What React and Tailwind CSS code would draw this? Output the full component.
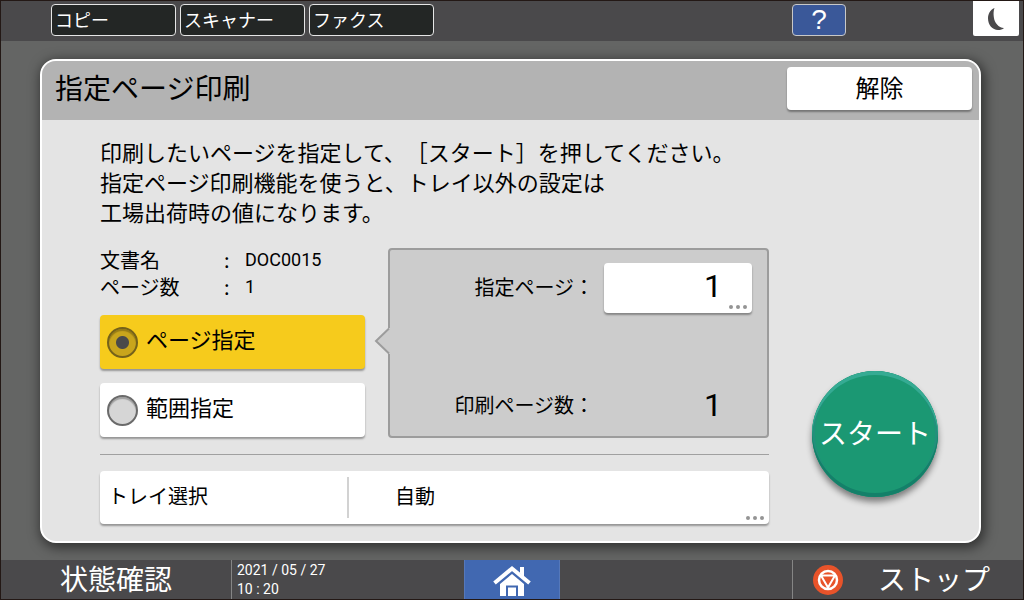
import React, { useState } from "react";

const tabs = ["コピー", "スキャナー", "ファクス"];

const modes = [
  { id: "page", label: "ページ指定" },
  { id: "range", label: "範囲指定" },
];

function Dots() {
  return (
    <span className="absolute bottom-1 right-[5px] flex gap-[3px]" aria-hidden="true">
      <span className="w-1 h-1 rounded-full bg-[#949494]" />
      <span className="w-1 h-1 rounded-full bg-[#949494]" />
      <span className="w-1 h-1 rounded-full bg-[#949494]" />
    </span>
  );
}

function MoonIcon() {
  return (
    <svg width="18" height="24" viewBox="0 0 18 24" aria-hidden="true">
      <path d="M7.500 1C3 3 1 7 1 11.500C1 18 5.500 23 11 23C13.500 23 15.500 22.400 17 21C11.500 20.500 7.500 16 6.800 10C6.400 6.500 6.500 3.500 7.500 1Z" fill="#4a494b" />
    </svg>
  );
}

function HomeIcon() {
  return (
    <svg width="40" height="32" viewBox="0 0 40 32" aria-hidden="true">
      <path d="M28 2h4v10l-4-4z" fill="#fff" />
      <path d="M2.500 18L20 3.500L37.500 18" fill="none" stroke="#fff" strokeWidth="4" />
      <path d="M8 31V19L20 9L32 19V31H26V20.500H14V31Z" fill="#fff" />
      <path d="M16 22.500h8V31h-8z" fill="#fff" />
    </svg>
  );
}

function StopIcon() {
  return (
    <svg width="30" height="30" viewBox="0 0 30 30" aria-hidden="true">
      <circle cx="15" cy="15" r="15" fill="#e8532a" />
      <circle cx="15" cy="15" r="9" fill="none" stroke="#fff" strokeWidth="2.500" />
      <path d="M8 10.500h14l-7 12z" fill="none" stroke="#fff" strokeWidth="2" strokeLinejoin="round" />
    </svg>
  );
}

function TopBar() {
  return (
    <header className="flex items-start h-10 pl-[50px] pr-1 bg-[#4a494b] text-white">
      <nav className="flex gap-1 pt-[3px]">
        {tabs.map((tab) => (
          <button
            key={tab}
            className="w-[125px] h-8 px-[3px] pb-[2px] flex items-center text-left text-lg leading-none bg-[#232625] border border-[#e6e6e6] rounded"
          >
            {tab}
          </button>
        ))}
      </nav>
      <div className="ml-auto flex items-start gap-[127px]">
        <button className="w-[54px] h-8 mt-[3px] font-['Liberation_Sans'] text-[28px] leading-none bg-[#3a5899] border border-[#c8c8c8] rounded">
          ?
        </button>
        <button aria-label="省エネ" className="w-[46px] h-[35px] flex items-center justify-center bg-white rounded-b-xs">
          <MoonIcon />
        </button>
      </div>
    </header>
  );
}

function BottomBar() {
  return (
    <footer className="grid grid-cols-[1fr_96px_1fr] h-[39px] bg-[#4a494b] text-white">
      <div className="flex">
        <button className="w-[230px] pb-1 text-[28px] leading-none">状態確認</button>
        <div className="border-l border-[#858585] pl-[5px] pt-px font-['Roboto',sans-serif] text-sm leading-[19px]">
          <p>2021 / 05 / 27</p>
          <p>10 : 20</p>
        </div>
      </div>
      <button aria-label="ホーム" className="flex items-center justify-center pt-[2px] bg-[#4168b1] border-x border-[#5578ba]">
        <HomeIcon />
      </button>
      <button className="ml-auto w-[231px] flex items-center gap-[35px] pl-5 border-l border-[#858585]">
        <StopIcon />
        <span className="pb-1 text-[28px] leading-none">ストップ</span>
      </button>
    </footer>
  );
}

export default function App() {
  const [mode, setMode] = useState("page");

  return (
    <div className="min-h-screen flex flex-col border border-[#231815] bg-[#646564] text-black font-['Noto_Sans_CJK_JP',sans-serif] [text-spacing-trim:space-all]">
      <TopBar />

      <main className="flex-1 flex flex-col pt-[18px] pb-[17px] pl-[39px] pr-[42px]">
        <section className="flex-1 flex flex-col bg-[#e4e4e4] border-2 border-white rounded-2xl overflow-hidden shadow-[2px_3px_12px_2px_rgba(0,0,0,0.5)]">
          <div className="flex justify-between items-start h-[59px] pl-[13px] pr-[7px] pt-[6px] bg-[#b3b3b3]">
            <h1 className="text-[28px] leading-[40px]">指定ページ印刷</h1>
            <button className="w-[185px] h-[43px] pb-1 text-2xl leading-none bg-white rounded shadow-[0_2px_2px_rgba(0,0,0,0.35)]">
              解除
            </button>
          </div>

          <div className="flex-1 flex pl-[58px] pt-4 pb-[17px]">
            <div className="flex-1">
              <p className="text-[22px] leading-[30px]">
                印刷したいページを指定して、［スタート］を押してください。
                <br />
                指定ページ印刷機能を使うと、トレイ以外の設定は
                <br />
                工場出荷時の値になります。
              </p>

              <div className="flex items-end gap-[23px] mt-5">
                <div className="w-[265px] pb-px">
                  <dl className="grid grid-cols-[124px_21px_1fr] text-xl leading-[27px]">
                    <dt>文書名</dt>
                    <dd>:</dd>
                    <dd className="font-['Roboto',sans-serif] text-lg leading-[27px]">DOC0015</dd>
                    <dt>ページ数</dt>
                    <dd>:</dd>
                    <dd className="font-['Roboto',sans-serif] text-lg leading-[27px]">1</dd>
                  </dl>
                  <div className="flex flex-col gap-[14px] mt-[15px]">
                    {modes.map((m) => (
                      <label
                        key={m.id}
                        className="flex items-center gap-2 h-[54px] pl-[7px] text-[22px] leading-none bg-white has-checked:bg-[#f6cb1c] rounded shadow-[0_2px_2px_rgba(0,0,0,0.35)]"
                      >
                        <input
                          type="radio"
                          name="mode"
                          checked={mode === m.id}
                          onChange={() => setMode(m.id)}
                          className="appearance-none w-[31px] h-[31px] rounded-full border-2 border-[#6a6a6a] bg-[#d6d6d6] shadow-[inset_0_2px_1px_rgba(0,0,0,0.25)] checked:border-[#75621a] checked:bg-[radial-gradient(circle,#4a4a4a_6px,#c9a51c_7px)]"
                        />
                        <span className="pb-2">{m.label}</span>
                      </label>
                    ))}
                  </div>
                </div>

                <div className="relative flex-1 flex flex-col justify-between h-[190px] pt-[13px] pb-[13px] pr-[15px] bg-[#cccccc] border-2 border-[#9c9c9c] rounded text-xl">
                  <svg className="absolute -left-4 top-[78px]" width="17" height="26" viewBox="0 0 17 26" aria-hidden="true">
                    <path d="M17 0H15L2 13L15 26H17Z" fill="#cccccc" />
                    <path d="M15 0.500L2 13L15 25.500" fill="none" stroke="#9c9c9c" strokeWidth="2" />
                  </svg>
                  <div className="flex items-center justify-end gap-[10px]">
                    <label htmlFor="page" className="pb-[2px]">指定ページ：</label>
                    <span className="relative w-[148px] h-[50px] bg-white rounded shadow-[0_2px_2px_rgba(0,0,0,0.35)]">
                      <input
                        id="page"
                        defaultValue="1"
                        className="w-full h-full pr-[30px] pb-1 text-right font-['Roboto',sans-serif] text-[32px] leading-none bg-transparent outline-none"
                      />
                      <Dots />
                    </span>
                  </div>
                  <div className="flex items-center justify-end gap-[10px]">
                    <span>印刷ページ数：</span>
                    <output className="w-[148px] pr-[30px] text-right font-['Roboto',sans-serif] text-[32px] leading-[36px]">1</output>
                  </div>
                </div>
              </div>

              <hr className="mt-4 border-[#a0a0a0]" />

              <button className="relative w-full h-[53px] mt-4 flex items-center text-left text-xl leading-none bg-white rounded shadow-[0_2px_2px_rgba(0,0,0,0.35)]">
                <span className="w-[247px] pl-2 pb-1">トレイ選択</span>
                <span className="h-[41px] flex items-center pl-[46px] pb-1 border-l-2 border-[#d2d2d2]">自動</span>
                <Dots />
              </button>
            </div>

            <div className="w-[210px] flex items-end justify-center pl-[2px] pb-[27px]">
              <button className="w-[126px] h-[126px] rounded-full pb-1 text-[28px] leading-none text-white bg-[#1b9873] shadow-[inset_0_4px_0_#35ab93,inset_0_-4px_0_#148069,inset_0_0_0_3px_#22907a,0_5px_6px_rgba(0,0,0,0.45)]">
                スタート
              </button>
            </div>
          </div>
        </section>
      </main>

      <BottomBar />
    </div>
  );
}
